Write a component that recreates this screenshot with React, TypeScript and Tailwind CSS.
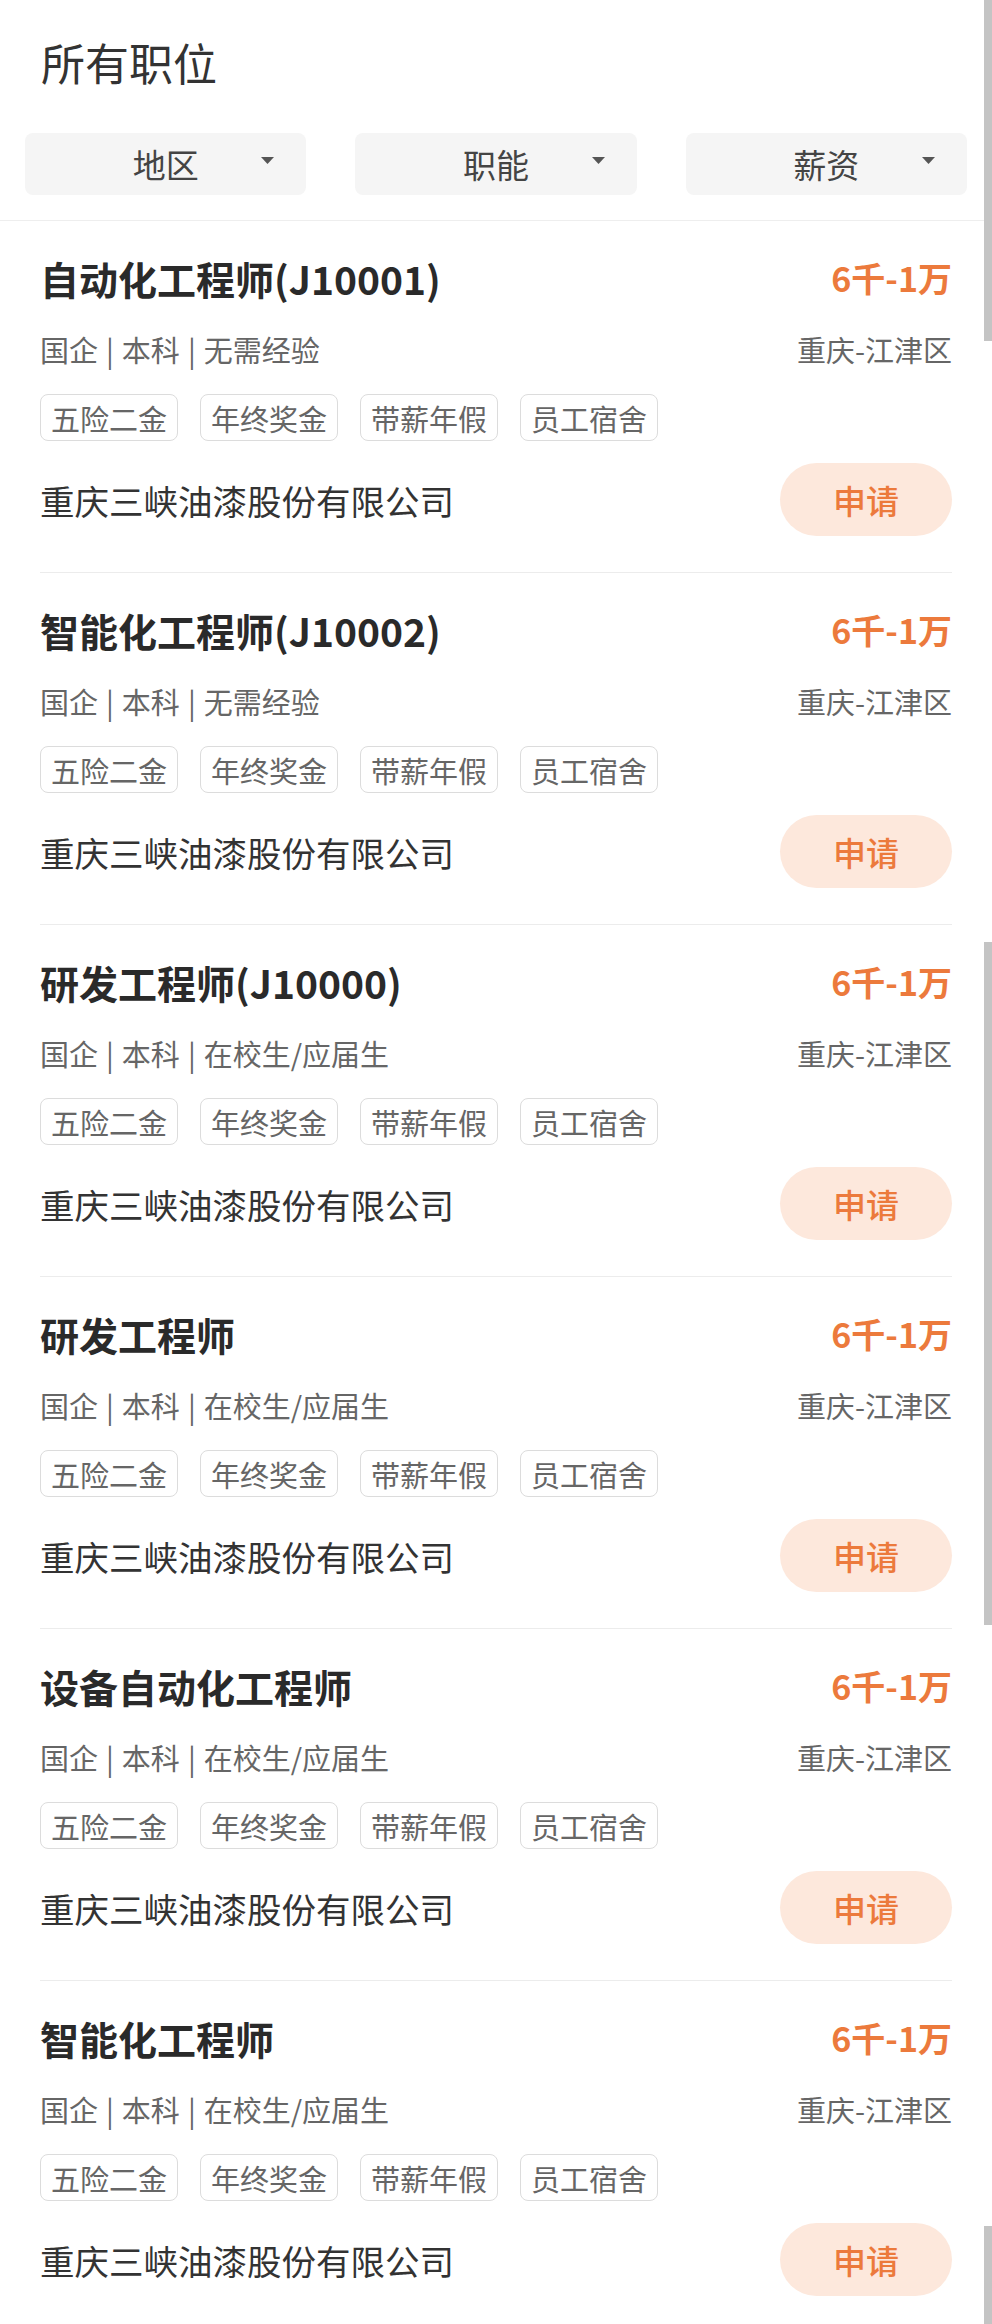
import React from "react";

const jobs = [
  { title: "自动化工程师(J10001)", exp: "无需经验" },
  { title: "智能化工程师(J10002)", exp: "无需经验" },
  { title: "研发工程师(J10000)", exp: "在校生/应届生" },
  { title: "研发工程师", exp: "在校生/应届生" },
  { title: "设备自动化工程师", exp: "在校生/应届生" },
  { title: "智能化工程师", exp: "在校生/应届生" },
];

const tags = ["五险二金", "年终奖金", "带薪年假", "员工宿舍"];

function Filter({ label }: { label: string }) {
  return (
    <div className="relative flex h-[62px] items-center justify-center rounded-[8px] bg-[#f5f5f5]">
      <span className="text-[33px] leading-[40px] text-[#444]">{label}</span>
      <svg
        className="absolute right-[32px] top-[24px]"
        width="13"
        height="7"
        viewBox="0 0 13 7"
      >
        <polygon points="0,0 13,0 6.5,7" fill="#555" />
      </svg>
    </div>
  );
}

function JobCard({ title, exp }: { title: string; exp: string }) {
  return (
    <div className="mx-[40px] border-b border-[#ececec] pt-[35px] pb-[36px]">
      <div className="flex h-[44px] items-center justify-between">
        <span className="text-[39px] font-bold leading-[44px] text-[#2a2a2a]">{title}</span>
        <span className="text-[34px] font-bold leading-[44px] text-[#ec7a3c]">6千-1万</span>
      </div>
      <div className="mt-[29px] flex h-[40px] items-center justify-between text-[29px] leading-[40px] text-[#666]">
        <span className="flex items-center gap-[8px]">
          <span>国企</span>
          <span>|</span>
          <span>本科</span>
          <span>|</span>
          <span>{exp}</span>
        </span>
        <span>重庆-江津区</span>
      </div>
      <div className="mt-[25px] flex gap-[22px]">
        {tags.map((t) => (
          <div
            key={t}
            className="flex h-[47px] items-center rounded-[8px] border border-[#dcdcdc] px-[10px] text-[29px] leading-[40px] text-[#666]"
          >
            {t}
          </div>
        ))}
      </div>
      <div className="mt-[22px] flex h-[73px] items-center justify-between">
        <span className="text-[34.5px] leading-[44px] text-[#333]">重庆三峡油漆股份有限公司</span>
        <div className="flex h-[73px] w-[172px] items-center justify-center rounded-full bg-[#fde8dc]">
          <span className="text-[33px] font-medium leading-[40px] text-[#ec7a3c]">申请</span>
        </div>
      </div>
    </div>
  );
}

export default function App() {
  return (
    <div
      className="relative h-[2324px] w-[992px] overflow-hidden bg-white"
      style={{ fontFamily: '"Noto Sans CJK SC", "Noto Sans", sans-serif' }}
    >
      <div className="border-b border-[#eeeeee] pb-[25px]">
        <div className="px-[41px] pt-[36px] text-[44px] leading-[52px] text-[#333]">所有职位</div>
        <div className="mt-[45px] grid grid-cols-3 gap-[49px] px-[25px]">
          <Filter label="地区" />
          <Filter label="职能" />
          <Filter label="薪资" />
        </div>
      </div>
      {jobs.map((j, i) => (
        <JobCard key={i} title={j.title} exp={j.exp} />
      ))}
      <div className="absolute right-0 top-0 h-[341px] w-[8px] bg-[#c4c4c4]" />
      <div className="absolute right-0 top-[942px] h-[683px] w-[8px] bg-[#c4c4c4]" />
      <div className="absolute right-0 top-[2226px] h-[98px] w-[8px] bg-[#c4c4c4]" />
    </div>
  );
}
